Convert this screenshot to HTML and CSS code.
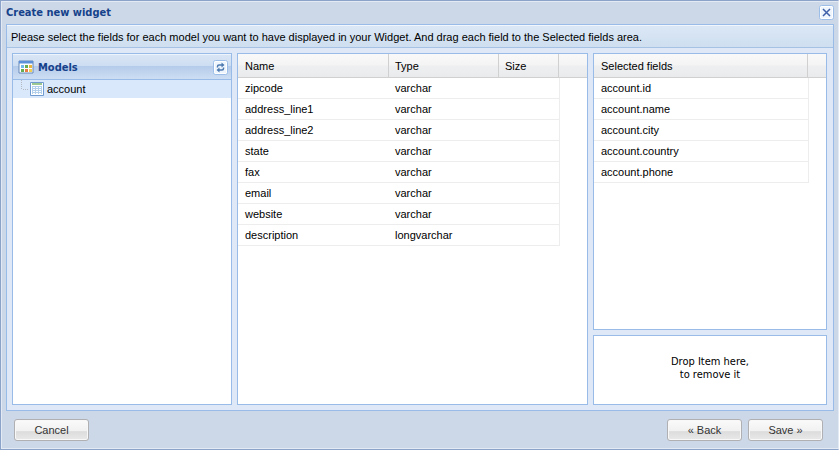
FILE: index.html
```html
<!DOCTYPE html>
<html lang="en">
<head>
<meta charset="utf-8">
<title>Create new widget</title>
<link rel="stylesheet" href="styles.css">
</head>
<body>
<main class="window">
  <header class="titlebar">
    <h1>Create new widget</h1>
    <button class="tool" type="button" aria-label="Close">
      <svg width="15" height="15" viewBox="0 0 15 15"><rect x=".5" y=".5" width="14" height="14" rx="2" fill="#eef5fd" stroke="#9bbde8"/><rect x="1.5" y="1.5" width="12" height="12" rx="1" fill="none" stroke="#fff"/><path d="M4 4l7 7M11 4l-7 7" stroke="#3f5fa8" stroke-width="1.5"/></svg>
    </button>
  </header>
  <section class="content">
    <p class="hint">Please select the fields for each model you want to have displayed in your Widget. And drag each field to the Selected fields area.</p>
    <div class="panels">
      <section class="panel">
        <header class="panel-head">
          <svg width="16" height="16" viewBox="0 0 16 16"><path d="M1 2h14v12H1z" fill="#fff" stroke="#6488b8"/><path d="M1 2h14v2.500H1z" fill="#5c90d8"/><path d="M3 6h3v3H3z" fill="#74b9ec"/><path d="M7 6h3v3H7zM3 10h3v3H3z" fill="#65ad50"/><path d="M11 6h3v3h-3z" fill="#e9b63f"/><path d="M7 10h3v3H7z" fill="#e97b45"/><path d="M11 10h3v3h-3z" fill="#f0cf52"/></svg>
          <h2>Models</h2>
          <button class="tool" type="button" aria-label="Refresh">
            <svg width="15" height="15" viewBox="0 0 15 15"><rect x=".5" y=".5" width="14" height="14" rx="2" fill="#eef5fd" stroke="#9bbde8"/><rect x="1.500" y="1.500" width="12" height="12" rx="1" fill="none" stroke="#fff"/><path d="M4.500 7.500v-1q0-1.500 1.500-1.500h3M10.500 7.500v1q0 1.500-1.500 1.500H6" fill="none" stroke="#4c79b0" stroke-width="1.500"/><path d="M8.500 2.500L11.500 5l-3 2.500zM6.500 7.500L3.500 10l3 2.500z" fill="#4c79b0"/></svg>
          </button>
        </header>
        <ul class="tree">
          <li>
            <svg width="16" height="18" viewBox="0 0 16 18"><path d="M8.500 0v9M10 9.500h6" fill="none" stroke="#b4bac4" stroke-dasharray="1 1"/></svg>
            <svg width="16" height="16" viewBox="0 0 16 16"><path d="M1.500 1.500h13v13h-13z" fill="#fff" stroke="#6f9bd0"/><path d="M3 3h10" stroke="#78b66b" stroke-width="1.500"/><path d="M3 5h10v8H3z" fill="#b2cfec"/><path d="M4 6h2v1H4zM7 6h2v1H7zM10 6h2v1h-2zM4 8h2v1H4zM7 8h2v1H7zM10 8h2v1h-2zM4 10h2v1H4zM7 10h2v1H7zM10 10h2v1h-2zM4 12h2v1H4zM7 12h2v1H7zM10 12h2v1h-2z" fill="#fff"/></svg>
            <span>account</span>
          </li>
        </ul>
      </section>
      <section class="panel">
        <table>
          <colgroup><col class="col-name"><col class="col-type"><col class="col-size"><col></colgroup>
          <thead><tr><th>Name</th><th>Type</th><th>Size</th><td></td></tr></thead>
          <tbody>
            <tr><td>zipcode</td><td>varchar</td><td></td><td></td></tr>
            <tr><td>address_line1</td><td>varchar</td><td></td><td></td></tr>
            <tr><td>address_line2</td><td>varchar</td><td></td><td></td></tr>
            <tr><td>state</td><td>varchar</td><td></td><td></td></tr>
            <tr><td>fax</td><td>varchar</td><td></td><td></td></tr>
            <tr><td>email</td><td>varchar</td><td></td><td></td></tr>
            <tr><td>website</td><td>varchar</td><td></td><td></td></tr>
            <tr><td>description</td><td>longvarchar</td><td></td><td></td></tr>
          </tbody>
        </table>
      </section>
      <div class="side">
        <section class="panel">
          <table>
            <colgroup><col><col class="col-scroll"></colgroup>
            <thead><tr><th>Selected fields</th><td></td></tr></thead>
            <tbody>
              <tr><td>account.id</td><td></td></tr>
              <tr><td>account.name</td><td></td></tr>
              <tr><td>account.city</td><td></td></tr>
              <tr><td>account.country</td><td></td></tr>
              <tr><td>account.phone</td><td></td></tr>
            </tbody>
          </table>
        </section>
        <section class="panel drop"><p>Drop Item here,<br>to remove it</p></section>
      </div>
    </div>
  </section>
  <footer class="buttons">
    <button class="btn" type="button">Cancel</button>
    <span class="spacer"></span>
    <button class="btn" type="button">« Back</button>
    <button class="btn" type="button">Save »</button>
  </footer>
</main>
</body>
</html>
```
FILE: styles.css
```css
* {
  box-sizing: border-box;
}

body {
  margin: 0;
  font: 11px/13px "Liberation Sans", Arial, sans-serif;
  color: #000;
}

h1, h2, p, ul {
  margin: 0;
  padding: 0;
}

svg {
  display: block;
  flex: none;
}

.window {
  display: flex;
  flex-direction: column;
  min-height: 100vh;
  padding: 0 4px 0 5px;
  background: #ccd8e7;
  border: 1px solid #8ba3c8;
  border-right-color: #e3eaf4;
  box-shadow: inset 1px 1px #e3eaf4, inset 0 -1px #e3eaf4;
}

h1, h2 {
  flex: 1;
  font: bold 11px/15px "DejaVu Sans Condensed", Tahoma, sans-serif;
  color: #15428b;
}

.titlebar {
  display: flex;
  align-items: center;
  height: 23px;
}

.tool {
  padding: 0;
  border: 0;
  background: none;
}

.content {
  flex: 1;
  display: flex;
  flex-direction: column;
  border: 1px solid #99bbe8;
  background: #dfe8f6;
}

.hint {
  padding: 5px 4px 3px;
  border-top: 1px solid #f0f6fc;
  border-bottom: 1px solid #a5c1e3;
  background: linear-gradient(#dbe7f5, #cfdff0);
}

.panels {
  flex: 1;
  display: grid;
  grid-template-columns: 220px 1fr 234px;
  gap: 5px;
  padding: 5px 6px 5px 5px;
}

.side {
  display: grid;
  grid-template-rows: 1fr 70px;
  gap: 5px;
}

.panel {
  min-width: 0;
  border: 1px solid #99bbe8;
  background: #fff;
}

.panel-head {
  display: flex;
  align-items: center;
  gap: 4px;
  height: 26px;
  padding: 0 3px 0 5px;
  border-top: 1px solid #eef4fb;
  border-bottom: 1px solid #99bbe8;
  background: linear-gradient(#d9e5f5, #cedef2 44%, #b5cbea 46%, #cddef3);
}

.tree {
  list-style: none;
}

.tree li {
  display: flex;
  align-items: center;
  height: 18px;
  background: #d9e8fb;
}

.tree span {
  padding-left: 2px;
}

table {
  width: 100%;
  table-layout: fixed;
  border-collapse: separate;
  border-spacing: 0;
}

th, td {
  padding: 0 7px;
  text-align: left;
  font-weight: normal;
}

th + th, td + td {
  padding-left: 6px;
}

thead {
  background: linear-gradient(#f9f9f9, #f4f4f4 45%, #eeeff0 50%, #e9eaeb);
}

thead th, thead td {
  height: 24px;
  padding-top: 1px;
  border-bottom: 1px solid #d0d0d0;
}

thead th {
  border-right: 1px solid #d0d0d0;
}

tbody td {
  height: 21px;
  border-bottom: 1px solid #ededed;
}

tbody td:last-child {
  border-bottom: 0;
  border-left: 1px solid #ededed;
}

.col-name {
  width: 151px;
}

.col-type {
  width: 110px;
}

.col-size {
  width: 60px;
}

.col-scroll {
  width: 18px;
}

.drop {
  display: grid;
  place-items: center;
  padding-bottom: 4px;
  text-align: center;
  font-family: "DejaVu Sans Condensed", Tahoma, sans-serif;
}

.buttons {
  display: flex;
  gap: 6px;
  padding: 8px 11px 8px 8px;
}

.spacer {
  flex: 1;
}

.btn {
  width: 75px;
  height: 22px;
  padding: 0;
  border: 1px solid #b0b0b2;
  border-radius: 3px;
  background: linear-gradient(#fafafa, #f1f1f1 55%, #dcdcdc 58%, #e9e9e9);
  box-shadow: inset 0 0 0 1px #f8f8f8;
  font: inherit;
  color: #333;
}
```
